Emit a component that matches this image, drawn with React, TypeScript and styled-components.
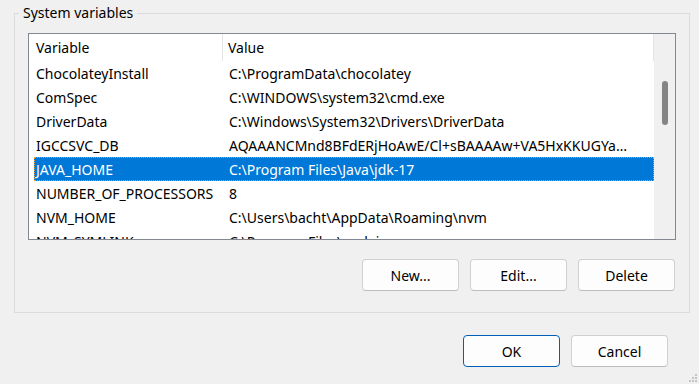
import React from "react";
import styled, { createGlobalStyle } from "styled-components";

interface EnvVar {
  name: string;
  value: string;
}

const variables: EnvVar[] = [
  { name: "ChocolateyInstall", value: "C:\\ProgramData\\chocolatey" },
  { name: "ComSpec", value: "C:\\WINDOWS\\system32\\cmd.exe" },
  { name: "DriverData", value: "C:\\Windows\\System32\\Drivers\\DriverData" },
  {
    name: "IGCCSVC_DB",
    value: "AQAAANCMnd8BFdERjHoAwE/Cl+sBAAAAw+VA5HxKKUGYa…",
  },
  { name: "JAVA_HOME", value: "C:\\Program Files\\Java\\jdk-17" },
  { name: "NUMBER_OF_PROCESSORS", value: "8" },
  { name: "NVM_HOME", value: "C:\\Users\\bacht\\AppData\\Roaming\\nvm" },
  { name: "NVM_SYMLINK", value: "C:\\Program Files\\nodejs" },
];

const GlobalStyle = createGlobalStyle`
  html, body {
    margin: 0;
    padding: 0;
    background: #f0f0f0;
  }
  body {
    font-family: "Noto Sans", "Open Sans", sans-serif;
    font-size: 14px;
    color: #000;
    overflow: hidden;
  }
`;

const Window = styled.div`
  position: relative;
  width: 699px;
  height: 384px;
  box-sizing: border-box;
  padding: 3px 9px 0 14px;
  display: flex;
  flex-direction: column;
`;

const GroupBox = styled.fieldset`
  margin: 0;
  padding: 0 13px 20px 13px;
  width: 676px;
  height: 310px;
  box-sizing: border-box;
  border: 1px solid #dcdcdc;
  display: flex;
  flex-direction: column;
`;

const Legend = styled.legend`
  margin-left: -9px;
  padding: 0 4px;
  line-height: 20px;
  color: #000;
`;

const ListBox = styled.div`
  margin-top: 10px;
  height: 207px;
  box-sizing: border-box;
  border: 1px solid #828790;
  background: #fff;
  display: flex;
  overflow: hidden;
`;

const ListBody = styled.div`
  flex: 1;
  display: flex;
  flex-direction: column;
  min-width: 0;
`;

const HeaderRow = styled.div`
  display: flex;
  height: 27px;
  flex-shrink: 0;
`;

const HeaderCell = styled.div<{ $width?: number; $pad: number }>`
  ${(p) => (p.$width ? `width: ${p.$width}px;` : "flex: 1;")}
  flex-shrink: 0;
  box-sizing: border-box;
  padding-left: ${(p) => p.$pad}px;
  display: flex;
  align-items: center;
  border-right: 1px solid #e5e5e5;
  white-space: nowrap;
`;

const Row = styled.div<{ $selected?: boolean }>`
  display: flex;
  height: 24px;
  flex-shrink: 0;
  margin-left: 5px;
  box-sizing: border-box;
  background: ${(p) => (p.$selected ? "#0078d7" : "transparent")};
  color: ${(p) => (p.$selected ? "#fff" : "#000")};
  border: 1px dotted ${(p) => (p.$selected ? "#f39a2e" : "transparent")};
`;

const Cell = styled.div<{ $width?: number; $pad: number }>`
  ${(p) => (p.$width ? `width: ${p.$width}px;` : "flex: 1;")}
  flex-shrink: 0;
  min-width: 0;
  box-sizing: border-box;
  padding-left: ${(p) => p.$pad}px;
  display: flex;
  align-items: center;
  white-space: nowrap;
  overflow: hidden;
  text-overflow: ellipsis;
`;

const ScrollTrack = styled.div`
  width: 21px;
  flex-shrink: 0;
  background: #f0f0f0;
  display: flex;
  justify-content: center;
  padding-top: 47px;
  box-sizing: border-box;
`;

const ScrollThumb = styled.div`
  width: 6px;
  height: 44px;
  border-radius: 3px;
  background: #858585;
`;

const ButtonRow = styled.div<{ $top: number; $right: number }>`
  display: flex;
  justify-content: flex-end;
  gap: 11px;
  margin-top: ${(p) => p.$top}px;
  padding-right: ${(p) => p.$right}px;
`;

const Button = styled.button<{ $primary?: boolean }>`
  width: 97px;
  height: 32px;
  font-family: inherit;
  font-size: 14px;
  color: #000;
  background: #fdfdfd;
  border: 1px solid ${(p) => (p.$primary ? "#005fb8" : "#d0d0d0")};
  border-bottom-color: ${(p) => (p.$primary ? "#005fb8" : "#bdbdbd")};
  border-radius: 4px;
  padding: 0;
`;

const Grip = styled.svg`
  position: absolute;
  right: 1px;
  bottom: 1px;
`;

export default function App() {
  return (
    <>
      <GlobalStyle />
      <Window>
        <GroupBox>
          <Legend>System variables</Legend>
          <ListBox>
            <ListBody>
              <HeaderRow>
                <HeaderCell $width={194} $pad={7}>
                  Variable
                </HeaderCell>
                <HeaderCell $pad={5}>Value</HeaderCell>
              </HeaderRow>
              {variables.map((v) => (
                <Row key={v.name} $selected={v.name === "JAVA_HOME"}>
                  <Cell $width={188} $pad={1}>
                    {v.name}
                  </Cell>
                  <Cell $pad={6}>{v.value}</Cell>
                </Row>
              ))}
            </ListBody>
            <ScrollTrack>
              <ScrollThumb />
            </ScrollTrack>
          </ListBox>
          <ButtonRow $top={19} $right={1}>
            <Button>New...</Button>
            <Button>Edit...</Button>
            <Button>Delete</Button>
          </ButtonRow>
        </GroupBox>
        <ButtonRow $top={22} $right={22}>
          <Button $primary>OK</Button>
          <Button>Cancel</Button>
        </ButtonRow>
        <Grip width="10" height="10" viewBox="0 0 10 10">
          <rect x="7" y="1" width="2" height="2" fill="#c6c6c6" />
          <rect x="4" y="4" width="2" height="2" fill="#c6c6c6" />
          <rect x="7" y="4" width="2" height="2" fill="#c6c6c6" />
          <rect x="1" y="7" width="2" height="2" fill="#c6c6c6" />
          <rect x="4" y="7" width="2" height="2" fill="#c6c6c6" />
          <rect x="7" y="7" width="2" height="2" fill="#c6c6c6" />
        </Grip>
      </Window>
    </>
  );
}
